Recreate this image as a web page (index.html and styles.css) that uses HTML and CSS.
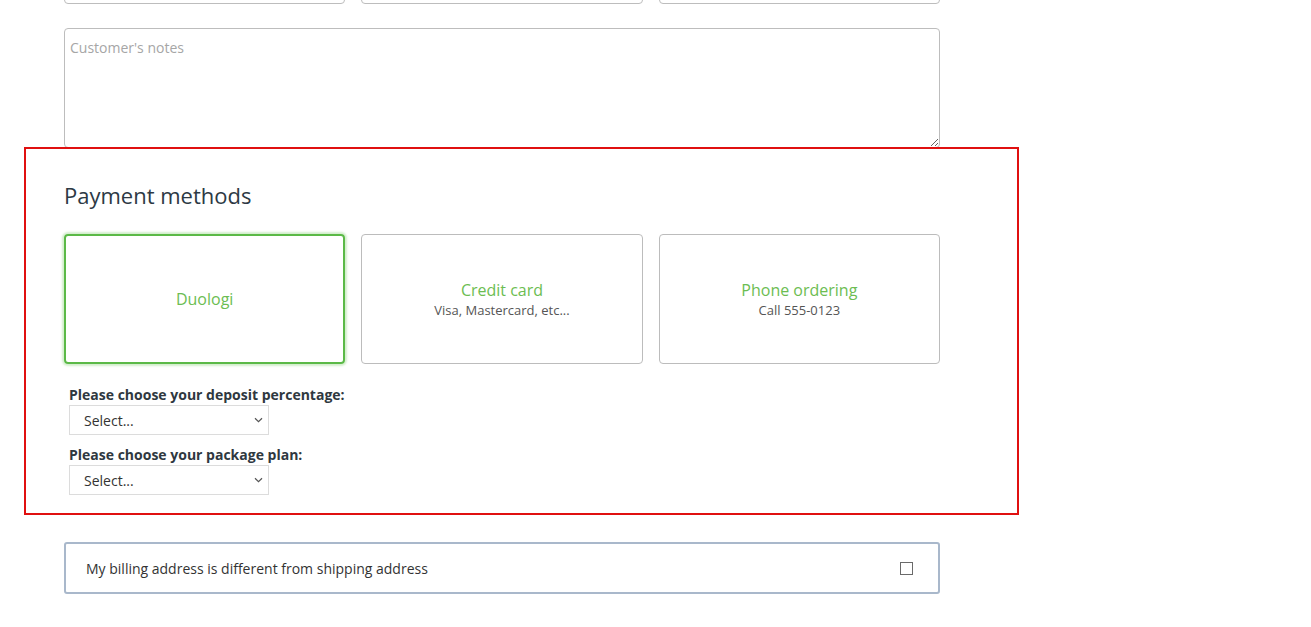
FILE: index.html
```html
<!DOCTYPE html>
<html lang="en">
<head>
<meta charset="utf-8">
<title>Checkout</title>
<link rel="stylesheet" href="styles.css">
</head>
<body>
<div class="page">
  <div class="block top-row">
    <input class="field" type="text">
    <input class="field" type="text">
    <input class="field" type="text">
  </div>
  <div class="block">
    <textarea class="notes" placeholder="Customer's notes"></textarea>
  </div>
  <section class="payment">
    <div class="inner">
      <h2 class="title">Payment methods</h2>
      <div class="methods">
        <div class="method selected">
          <div class="m-name">Duologi</div>
        </div>
        <div class="method">
          <div class="m-name">Credit card</div>
          <div class="m-sub">Visa, Mastercard, etc...</div>
        </div>
        <div class="method">
          <div class="m-name">Phone ordering</div>
          <div class="m-sub">Call 555-0123</div>
        </div>
      </div>
      <div class="opts">
        <label class="opt-label">Please choose your deposit percentage:</label>
        <span class="sel-wrap">
          <select class="sel"><option>Select...</option></select>
          <svg class="chev" width="9" height="6" viewBox="0 0 9 6"><path d="M1 1.2 L4.5 4.6 L8 1.2" fill="none" stroke="#555" stroke-width="1.2"/></svg>
        </span>
        <label class="opt-label second">Please choose your package plan:</label>
        <span class="sel-wrap">
          <select class="sel"><option>Select...</option></select>
          <svg class="chev" width="9" height="6" viewBox="0 0 9 6"><path d="M1 1.2 L4.5 4.6 L8 1.2" fill="none" stroke="#555" stroke-width="1.2"/></svg>
        </span>
      </div>
    </div>
  </section>
  <div class="block">
    <label class="billing">
      <span>My billing address is different from shipping address</span>
      <input type="checkbox" class="chk">
    </label>
  </div>
</div>
</body>
</html>
```
FILE: styles.css
```css
html, body {
  margin: 0;
  padding: 0;
  background: #fff;
}
body {
  font-family: "Open Sans", "Liberation Sans", sans-serif;
  color: #333;
  font-size: 14px;
}
.page {
  width: 995px;
  margin-left: 24px;
}
.block {
  margin-left: 40px;
  width: 876px;
}
.top-row {
  display: grid;
  grid-template-columns: repeat(3, 1fr);
  gap: 16px;
  margin-top: -37px;
}
.field {
  box-sizing: border-box;
  width: 100%;
  height: 41px;
  border: 1px solid #bdbdbd;
  border-radius: 4px;
  margin: 0;
  font-family: inherit;
}
.notes {
  display: block;
  box-sizing: border-box;
  width: 876px;
  height: 120px;
  margin: 24px 0 0 0;
  border: 1px solid #bdbdbd;
  border-radius: 4px;
  padding: 9px 5px;
  font-family: "Open Sans", "Liberation Sans", sans-serif;
  font-size: 14px;
  color: #333;
  line-height: 19px;
}
.notes::placeholder {
  color: #a6a6a6;
}
.payment {
  border: 2px solid #e01010;
  margin-top: -1px;
}
.inner {
  width: 876px;
  margin-left: 38px;
  padding: 31px 0 18px;
}
.title {
  margin: 0;
  font-size: 22px;
  font-weight: 400;
  color: #2d3944;
  line-height: 30px;
}
.methods {
  display: grid;
  grid-template-columns: repeat(3, 1fr);
  gap: 16px;
  margin-top: 24px;
}
.method {
  box-sizing: border-box;
  height: 130px;
  border: 1px solid #bcbcbc;
  border-radius: 4px;
  display: flex;
  flex-direction: column;
  align-items: center;
  justify-content: center;
}
.method.selected {
  border: 2px solid #5bb947;
  box-shadow: 0 0 2px 2px rgba(110, 200, 90, 0.3);
}
.m-name {
  color: #6cbd52;
  font-size: 16px;
  line-height: 22px;
}
.m-sub {
  color: #555;
  font-size: 13px;
  line-height: 18px;
}
.opts {
  display: flex;
  flex-direction: column;
  align-items: flex-start;
  padding-left: 5px;
  margin-top: 20px;
}
.opt-label {
  font-weight: 700;
  font-size: 14px;
  line-height: 21px;
  color: #2f3840;
}
.opt-label.second {
  margin-top: 9px;
}
.sel-wrap {
  position: relative;
  display: block;
  width: 200px;
  height: 30px;
}
.sel {
  appearance: none;
  -webkit-appearance: none;
  box-sizing: border-box;
  display: block;
  width: 200px;
  height: 30px;
  border: 1px solid #dcdcdc;
  border-radius: 0;
  background: #fff;
  font-family: "Open Sans", "Liberation Sans", sans-serif;
  font-size: 14px;
  color: #333;
  padding: 0 24px 0 14px;
  margin: 0;
}
.chev {
  position: absolute;
  right: 6px;
  top: 12px;
  pointer-events: none;
}
.billing {
  box-sizing: border-box;
  margin-top: 27px;
  height: 52px;
  border: 2px solid #a9b8cb;
  border-radius: 3px;
  display: flex;
  align-items: center;
  justify-content: space-between;
  padding: 0 25px 0 20px;
  font-size: 14px;
  color: #333;
}
.chk {
  appearance: none;
  -webkit-appearance: none;
  width: 13px;
  height: 13px;
  border: 1px solid #6a6a6a;
  border-radius: 0;
  margin: 0;
  background: #fff;
}
```
